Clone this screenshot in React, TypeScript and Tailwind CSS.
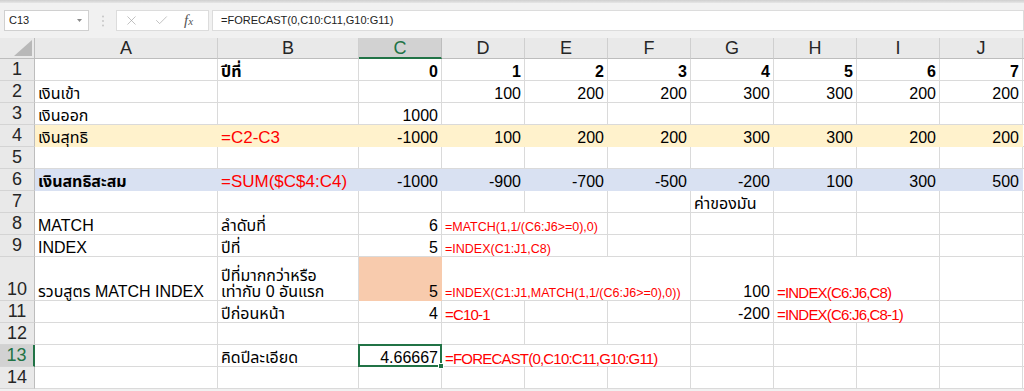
import React from "react";
import { X, Check } from "lucide-react";

const sans = "font-['Liberation_Sans','Noto_Sans_Thai','Noto_Sans',Tahoma,sans-serif]";

type Fill = "y" | "b" | "o";
type Red = "sm" | "md" | "lg";

function Cell({
  span = 1,
  right,
  fill,
  red,
  bold,
  className = "",
  children,
}: {
  span?: number;
  right?: boolean;
  fill?: Fill;
  red?: Red;
  bold?: boolean;
  className?: string;
  children?: React.ReactNode;
}) {
  const spanCls = span === 3 ? "col-span-3" : span === 2 ? "col-span-2" : "";
  const fillCls =
    fill === "y"
      ? "bg-[#fff2cc] border-[#fff2cc]"
      : fill === "b"
      ? "bg-[#d9e1f2] border-[#d9e1f2]"
      : fill === "o"
      ? "bg-[#f8cbad] border-[#f8cbad]"
      : "bg-white border-[#dadada]";
  const textCls =
    red === "sm"
      ? "text-[12.5px] text-[#ff0000] pb-[1px]"
      : red === "md"
      ? "text-[15px] tracking-[-0.8px] text-[#ff0000]"
      : red === "lg"
      ? "text-[17px] text-[#ff0000]"
      : "text-[16px] text-black";
  return (
    <div
      className={`${spanCls} ${fillCls} ${textCls} ${right ? "justify-end" : ""} ${
        bold ? "font-bold" : ""
      } flex items-end border-r border-b px-[3px] leading-none whitespace-nowrap ${className}`}
    >
      {children}
    </div>
  );
}

function RowHead({ n, active }: { n: number; active?: boolean }) {
  return (
    <div
      className={`flex items-end justify-center border-b border-[#d4d4d4] pb-[2px] text-[18px] leading-none ${
        active
          ? "bg-[#d2d2d2] text-[#217346] border-r-2 border-r-[#217346]"
          : "bg-[#e9e9e9] text-[#262626] border-r border-r-[#bdbdbd]"
      }`}
    >
      {n}
    </div>
  );
}

function Empty({ n = 1 }: { n?: number }) {
  return (
    <>
      {Array.from({ length: n }).map((_, i) => (
        <Cell key={i} />
      ))}
    </>
  );
}

const cols = ["A", "B", "C", "D", "E", "F", "G", "H", "I", "J"];

export default function App() {
  return (
    <div className={`w-[1024px] h-[391px] overflow-hidden bg-[#f1f1f1] ${sans}`}>
      {/* formula bar */}
      <div className="h-[3px] bg-gradient-to-b from-[#cfcfcf] to-[#e6e6e6]" />
      <div className="h-[35px] flex items-start pt-[7px] pl-[4px]">
        <div className="w-[85px] h-[21px] bg-white border border-[#d0d0d0] flex items-center justify-between pl-[4px] pr-[6px] text-[11px] text-[#222]">
          <span>C13</span>
          <svg width="5" height="3" viewBox="0 0 5 3">
            <path d="M0 0h5L2.5 3z" fill="#8a8a8a" />
          </svg>
        </div>
        <div className="w-[27px] h-[21px] flex items-center justify-center">
          <svg width="2" height="12" viewBox="0 0 2 12">
            <circle cx="1" cy="1.5" r="0.9" fill="#c2c2c2" />
            <circle cx="1" cy="6" r="0.9" fill="#c2c2c2" />
            <circle cx="1" cy="10.5" r="0.9" fill="#c2c2c2" />
          </svg>
        </div>
        <div className="w-[93px] h-[21px] bg-white border border-[#dcdcdc] flex items-center pl-[7px] gap-[15px]">
          <X size={15} strokeWidth={1.1} className="text-[#a6a6a6]" />
          <Check size={15} strokeWidth={1.1} className="text-[#a6a6a6]" />
          <span className="font-['Liberation_Serif',serif] italic text-[15px] text-[#555] leading-none">
            f<span className="text-[11px]">x</span>
          </span>
        </div>
        <div className="ml-[3px] flex-1 h-[21px] bg-white border border-[#dcdcdc] flex items-center pl-[8px] text-[11px] text-[#222]">
          =FORECAST(0,C10:C11,G10:G11)
        </div>
      </div>

      {/* sheet */}
      <div className="grid grid-cols-[35px_183px_141px_repeat(8,83px)_1fr] grid-rows-[21px_repeat(9,22px)_44px_repeat(4,22px)] bg-white">
        {/* header row */}
        <div className="relative bg-[#e9e9e9] border-r border-b border-[#bdbdbd]">
          <svg className="absolute right-[2px] bottom-[2px]" width="18" height="16" viewBox="0 0 18 16">
            <path d="M18 0V16H0z" fill="#b8b8b8" />
          </svg>
        </div>
        {cols.map((c) => (
          <div
            key={c}
            className={`flex items-center justify-center text-[18px] leading-none ${
              c === "C"
                ? "bg-[#d2d2d2] text-[#217346] border-r border-r-[#bdbdbd] border-b-2 border-b-[#217346]"
                : "bg-[#e9e9e9] text-[#262626] border-r border-r-[#cfcfcf] border-b border-b-[#bdbdbd]"
            }`}
          >
            {c}
          </div>
        ))}
        <div className="bg-[#e9e9e9] border-b border-[#bdbdbd]" />

        {/* 1 */}
        <RowHead n={1} />
        <Cell />
        <Cell bold>ปีที่</Cell>
        {[0, 1, 2, 3, 4, 5, 6, 7].map((v) => (
          <Cell key={v} right bold>
            {v}
          </Cell>
        ))}
        <Cell />

        {/* 2 */}
        <RowHead n={2} />
        <Cell>เงินเข้า</Cell>
        <Cell />
        <Cell />
        {[100, 200, 200, 300, 300, 200, 200].map((v, i) => (
          <Cell key={i} right>
            {v}
          </Cell>
        ))}
        <Cell />

        {/* 3 */}
        <RowHead n={3} />
        <Cell>เงินออก</Cell>
        <Cell />
        <Cell right>1000</Cell>
        <Empty n={7} />
        <Cell />

        {/* 4 */}
        <RowHead n={4} />
        <Cell fill="y">เงินสุทธิ</Cell>
        <Cell fill="y" red="lg">
          =C2-C3
        </Cell>
        <Cell fill="y" right>
          -1000
        </Cell>
        {[100, 200, 200, 300, 300, 200, 200].map((v, i) => (
          <Cell key={i} fill="y" right>
            {v}
          </Cell>
        ))}
        <Cell />

        {/* 5 */}
        <RowHead n={5} />
        <Empty n={10} />
        <Cell />

        {/* 6 */}
        <RowHead n={6} />
        <Cell fill="b" bold>
          เงินสทธิสะสม
        </Cell>
        <Cell fill="b" red="lg">
          =SUM($C$4:C4)
        </Cell>
        {[-1000, -900, -700, -500, -200, 100, 300, 500].map((v, i) => (
          <Cell key={i} fill="b" right>
            {v}
          </Cell>
        ))}
        <Cell />

        {/* 7 */}
        <RowHead n={7} />
        <Empty n={6} />
        <Cell>ค่าของมัน</Cell>
        <Empty n={3} />
        <Cell />

        {/* 8 */}
        <RowHead n={8} />
        <Cell>MATCH</Cell>
        <Cell>ลำดับที่</Cell>
        <Cell right>6</Cell>
        <Cell span={2} red="sm">
          =MATCH(1,1/(C6:J6&gt;=0),0)
        </Cell>
        <Empty n={5} />
        <Cell />

        {/* 9 */}
        <RowHead n={9} />
        <Cell>INDEX</Cell>
        <Cell>ปีที่</Cell>
        <Cell right>5</Cell>
        <Cell span={2} red="sm">
          =INDEX(C1:J1,C8)
        </Cell>
        <Empty n={5} />
        <Cell />

        {/* 10 */}
        <RowHead n={10} />
        <Cell>รวบสูตร MATCH INDEX</Cell>
        <Cell className="flex-col !items-start justify-end leading-[21px]">
          <span>ปีที่มากกว่าหรือ</span>
          <span>เท่ากับ 0 อันแรก</span>
        </Cell>
        <Cell fill="o" right>
          5
        </Cell>
        <Cell span={3} red="sm">
          =INDEX(C1:J1,MATCH(1,1/(C6:J6&gt;=0),0))
        </Cell>
        <Cell right>100</Cell>
        <Cell span={2} red="md">
          =INDEX(C6:J6,C8)
        </Cell>
        <Cell />
        <Cell />

        {/* 11 */}
        <RowHead n={11} />
        <Cell />
        <Cell>ปีก่อนหน้า</Cell>
        <Cell right>4</Cell>
        <Cell red="md">=C10-1</Cell>
        <Empty n={2} />
        <Cell right>-200</Cell>
        <Cell span={2} red="md">
          =INDEX(C6:J6,C8-1)
        </Cell>
        <Cell />
        <Cell />

        {/* 12 */}
        <RowHead n={12} />
        <Empty n={10} />
        <Cell />

        {/* 13 */}
        <RowHead n={13} active />
        <Cell />
        <Cell>คิดปีละเอียด</Cell>
        <Cell right className="relative">
          4.66667
          <div className="absolute -left-[1px] -top-[1px] -right-[1px] -bottom-[1px] border-2 border-[#217346]">
            <div className="absolute -right-[4px] -bottom-[4px] w-[6px] h-[6px] bg-[#217346] border border-white" />
          </div>
        </Cell>
        <Cell span={3} red="md">
          =FORECAST(0,C10:C11,G10:G11)
        </Cell>
        <Empty n={4} />
        <Cell />

        {/* 14 */}
        <RowHead n={14} />
        <Empty n={10} />
        <Cell />
      </div>
    </div>
  );
}
